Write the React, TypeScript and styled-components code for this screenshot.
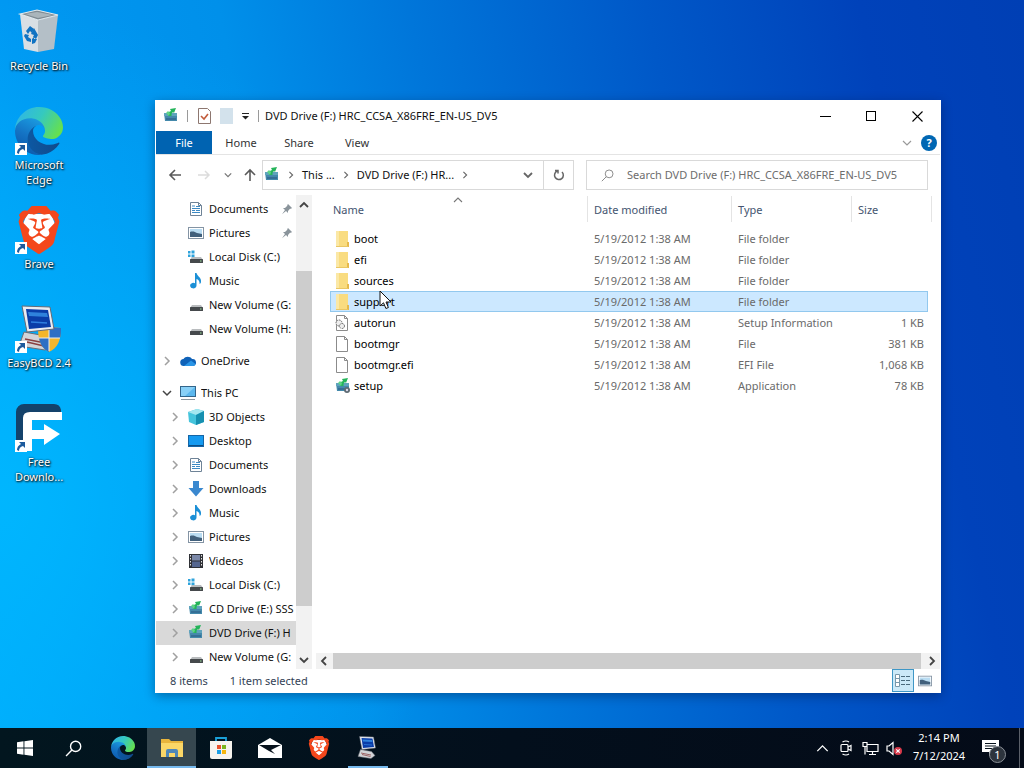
import React from 'react';
import styled, { createGlobalStyle, css } from 'styled-components';
import { SiBrave } from 'react-icons/si';

const GlobalStyle = createGlobalStyle`
  *, *::before, *::after { box-sizing: border-box; }
  html, body, #root { height: 100%; }
  body { margin: 0; overflow: hidden; }
  body, button, input { font-family: "Noto Sans", "Open Sans", sans-serif; font-size: 11px; line-height: 16px; }
  button { border: 0; padding: 0; margin: 0; background: none; color: inherit; }
  svg { display: block; flex: none; }
`;

/* ---------- icons ---------- */

type ChevronDir = 'right' | 'down' | 'up' | 'left';
const chevronPoints: Record<ChevronDir, string> = {
  right: '3,1 7,5 3,9',
  left: '7,1 3,5 7,9',
  down: '1,3 5,7 9,3',
  up: '1,7 5,3 9,7',
};
const Chevron = ({ dir, size = 10, color = '#555', weight = 1.4 }: { dir: ChevronDir; size?: number; color?: string; weight?: number }) => (
  <svg width={size} height={size} viewBox="0 0 10 10" fill="none" stroke={color} strokeWidth={weight}>
    <polyline points={chevronPoints[dir]} />
  </svg>
);

const EdgeIcon = ({ size }: { size: number }) => (
  <svg width={size} height={size} viewBox="0 0 256 256">
    <defs>
      <linearGradient id="edgeLow" x1="0" x2="1"><stop offset="0" stopColor="#0c59a4" /><stop offset="1" stopColor="#114a8b" /></linearGradient>
      <linearGradient id="edgeMid" x1="0.6" y1="0" x2="0.2" y2="1"><stop offset="0" stopColor="#1b9de2" /><stop offset="0.5" stopColor="#1473c4" /><stop offset="1" stopColor="#0b55a8" /></linearGradient>
      <linearGradient id="edgeTop" x1="0" x2="1" y1="0.2" y2="0.6"><stop offset="0" stopColor="#2fb4e8" /><stop offset="0.5" stopColor="#35c9bf" /><stop offset="1" stopColor="#66e04e" /></linearGradient>
    </defs>
    <path fill="url(#edgeLow)" d="M231 190.5c-3.4 1.8-6.9 3.4-10.5 4.7a101.9 101.9 0 0 1-35.9 6.5c-47.3 0-88.5-32.5-88.5-74.3.1-11.4 6.4-21.9 16.4-27.3-42.8 1.8-53.8 46.4-53.8 72.5 0 73.9 68.1 81.4 82.8 81.4 7.9 0 19.8-2.3 27-4.6l1.3-.4c27.6-9.5 51-28.1 66.6-52.8a4 4 0 0 0-5.4-5.7z" />
    <path fill="url(#edgeMid)" d="M105.7 241.4c-8.9-5.5-16.6-12.8-22.7-21.3-26.3-36-18.4-86.5 17.6-112.8 3.8-2.7 7.7-5.2 11.9-7.2 3.1-1.5 8.4-4.1 15.5-4 10.1.1 19.6 4.9 25.7 13 4 5.4 6.3 11.9 6.4 18.7 0-.2 24.5-79.6-80-79.6-43.9 0-80 41.7-80 78.2-.2 19.3 4 38.5 12.1 56 27.6 58.8 94.8 87.6 156.4 67.1-21.1 6.6-44.1 3.7-62.9-8.1z" />
    <path fill="url(#edgeTop)" d="M152.3 148.9c-.9 1-3.4 2.5-3.4 5.6 0 2.6 1.7 5.2 4.8 7.3 14.3 10 41.4 8.6 41.5 8.6 10.7 0 21.1-2.9 30.3-8.3 18.8-11 30.4-31.1 30.4-52.9.3-22.4-8-37.3-11.3-43.9C223.3 23.9 177.7 0 128.1 0 58.1 0 1 56.2.1 126.2c.5-36.5 36.8-66 80-66 3.5 0 23.5.3 42 10.1 16.3 8.6 24.9 18.9 30.8 29.2 6.2 10.7 7.3 24.1 7.3 29.5 0 5.3-2.7 13.3-7.9 19.9z" />
  </svg>
);

const BraveIcon = ({ size }: { size: number }) => (
  <svg width={size} height={size} viewBox="0 0 24 24">
    <path fill="#fff" d="M6 4h12l2 5-3 9-5 4-5-4-3-9z" />
    <SiBrave size={24} color="#f4471c" />
  </svg>
);

const RecycleBinIcon = () => (
  <svg width="48" height="48" viewBox="0 0 48 48">
    <path d="M5 6 23 12 23 44 9 41z" fill="#d9dfe4" />
    <path d="M23 12 43 7 39 41 23 44z" fill="#b4bfc7" />
    <path d="M5 6 22 2 43 7 23 12z" fill="#7f8b93" />
    <path d="M10 6 22 4 38 7 23 10z" fill="#aab5bb" />
    <path d="M5 6 22 2 43 7 23 12z" fill="none" stroke="#e4eaed" strokeWidth="1.2" />
    <g fill="#1173c2">
      <path d="m11 23 4-5 4 3-2 4-2-2-2 3z" />
      <path d="m19 20 4 7-2 4-3-2 1-2-3-1z" />
      <path d="m10 26 4 1-1 2 3 2v3l-4-1-3-5z" />
      <path d="m17 31 2-2v2l3 0-2 4-3 1z" />
    </g>
  </svg>
);

const MonitorIcon = ({ size, shield = false }: { size: number; shield?: boolean }) => (
  <svg width={size} height={size} viewBox="0 0 48 48">
    <path d="M9 27 31 31 38 39 30 45 4 41z" fill="#d2d4d8" stroke="#6b6e76" />
    <path d="m10 34 20 4m-18-1 17 4" stroke="#8a3f3f" strokeWidth="1.5" />
    {shield && (
      <g>
        <path d="M23 23c5 0 9-1 11-3 3 2 7 3 12 3 0 12-3 20-12 24-8-4-11-12-11-24z" fill="#f3b62b" />
        <path d="M34 20c3 2 7 3 12 3 0 4 0 7-1 10H34zM34 33v14c-6-3-9-8-10-14z" fill="#2d6fc4" />
        <path d="M34 21v25M24 33h21" stroke="#e8eef4" />
      </g>
    )}
    <path d="M7 1 35 2 39 24 12 27z" fill="#e9ecf1" stroke="#646a76" />
    <path d="M11 4 33 5 36 22 14 24z" fill="#0a3da8" />
    <path d="M13 7 32 8 33 12 14 11z" fill="#3ea0f2" opacity=".7" />
    <path d="m16 17 16 1" stroke="#2f7fe0" strokeWidth="1.5" />
  </svg>
);

const FdmIcon = () => (
  <svg width="48" height="48" viewBox="0 0 48 48">
    <path d="M1 47V8a8 8 0 0 1 8-8h30q6 0 7 6v4H14v37z" fill="#14426b" />
    <path d="M8 47V14q0-6 7-6h32v8H17v10h12v-6l16 10-16 11v-6H17v12z" fill="#fff" />
  </svg>
);

const DriveIcon = ({ windows = false }: { windows?: boolean }) => (
  <svg width="16" height="16" viewBox="0 0 16 16">
    {windows && <path d="M0 2h2.5v2.5H0zM3.5 1.5h3v3h-3zM0 5.5h2.5V8H0zM3.5 5.5h3v3h-3z" fill="#2ea3dc" />}
    <path d="M4 8h9l2 3H2z" fill="#b9bcbe" />
    <rect x="2" y="10" width="13" height="4" rx=".6" fill="#45494c" />
    <rect x="12" y="11.5" width="1.5" height="1" fill="#9be29b" />
  </svg>
);

const DiscIcon = ({ gear = false }: { gear?: boolean }) => (
  <svg width="16" height="16" viewBox="0 0 16 16">
    <path d="M1 5h13v8H2z" fill="#4489ab" />
    <path d="M1 5h13v3H1z" fill="#5fa3bd" />
    <path d="M3 10h10v2H3z" fill="#356f96" />
    <path d="M5 8Q4 4 8 3L7 1 13 0 11 5 10 4Q8 5 8.5 8z" fill="#25b45a" />
    <path d="M3 5 5 3 7 5 6 8z" fill="#5fd486" />
    {gear && <g><circle cx="12" cy="12" r="3" fill="#5d6a73" /><circle cx="12" cy="12" r="1.2" fill="#dde" /></g>}
  </svg>
);

const DocumentIcon = () => (
  <svg width="16" height="16" viewBox="0 0 16 16">
    <path d="M2.5 1.5h8l3 3v10h-11z" fill="#fff" stroke="#6e8397" />
    <path d="M10.5 1.5v3h3" fill="none" stroke="#6e8397" />
    <path d="M4 5h3M4 7.5h8M4 9.5h3M8 9.5h4M4 11.5h8" stroke="#3c8ac4" />
    <rect x="8" y="5" width="4" height="1" fill="#3c8ac4" />
  </svg>
);

const PicturesIcon = ({ size = 16 }: { size?: number }) => (
  <svg width={size} height={size} viewBox="0 0 16 16">
    <rect x=".5" y="2.5" width="15" height="11" fill="#fff" stroke="#8494a4" />
    <rect x="2" y="4" width="12" height="8" fill="#b9dcf2" />
    <path d="M2 7c3-1 5 0 7 1l5 1v3H2z" fill="#41607c" />
  </svg>
);

const MusicIcon = () => (
  <svg width="16" height="16" viewBox="0 0 16 16">
    <path d="M7 0h1.5c.5 3 5 4.5 4.5 8.5 0 1.5-.5 2-1.5 2.5.5-3-1.5-4.500-3-5V12.5A3.2 2.8 0 1 1 7 10.2z" fill="#1b8fd6" />
  </svg>
);

const CloudIcon = () => (
  <svg width="16" height="16" viewBox="0 0 16 16">
    <path d="M4 13a3.5 3.5 0 0 1-.5-7A5 5 0 0 1 12 6a3.5 3.5 0 0 1 1 7z" fill="#0f62b8" />
    <path d="M4 13 11 7.5 15.5 11Q15 13 13 13z" fill="#2a95e6" />
  </svg>
);

const PcIcon = () => (
  <svg width="16" height="16" viewBox="0 0 16 16">
    <rect x=".5" y="1.5" width="15" height="10" fill="#5cb8ee" stroke="#33658a" />
    <path d="M1 2h14L5 11H1z" fill="#88d0f7" />
    <path d="M1 14.5h14" stroke="#8b969e" />
  </svg>
);

const CubeIcon = () => (
  <svg width="16" height="16" viewBox="0 0 16 16">
    <path d="M0 3 9 0l7 2v11l-8 3-7-3z" fill="#45c4dc" />
    <path d="M0 3l8 3 8-4-7-2z" fill="#a5e7f0" />
    <path d="M8 6l8-4v11l-8 3z" fill="#1690b0" />
  </svg>
);

const DesktopIcon = () => (
  <svg width="16" height="16" viewBox="0 0 16 16">
    <rect x=".5" y="2.5" width="15" height="11" fill="#159af0" stroke="#1565a5" />
    <path d="M1 12.5h14" stroke="#0b4d85" />
  </svg>
);

const DownloadIcon = () => (
  <svg width="16" height="16" viewBox="0 0 16 16">
    <path d="M5 0h6v7h4.5L8 15.5 .5 7H5z" fill="#3a88cf" />
  </svg>
);

const VideoIcon = () => (
  <svg width="16" height="16" viewBox="0 0 16 16">
    <rect x="1" y="1" width="14" height="14" fill="#2f3136" />
    <rect x="4" y="2" width="8" height="5.5" fill="#7b88a8" />
    <rect x="4" y="8.5" width="8" height="5.5" fill="#566790" />
    <path d="M2.5 2v12M13.5 2v12" stroke="#e5e5e5" strokeDasharray="1.5 1.5" />
  </svg>
);

const PinIcon = () => (
  <svg width="12" height="12" viewBox="0 0 12 12">
    <path d="M7 1l4 4-1 .8-1 0L7 8v2L5 8 1 11.3 4 7 2 5h2l2.3-2.2V2z" fill="#8a949b" />
  </svg>
);

const FolderIcon = () => (
  <svg width="16" height="16" viewBox="0 0 16 16">
    <path d="M1 0h12v11l1 .5V16H1z" fill="#f9dc80" />
    <path d="M1 0h3v16H1z" fill="#fbe8a6" />
    <path d="M12 11h2v5h-2z" fill="#e6b94a" />
    <path d="M1 15.5h12" stroke="#eac764" />
  </svg>
);

const FileIcon = ({ gear = false }: { gear?: boolean }) => (
  <svg width="16" height="16" viewBox="0 0 16 16">
    <path d="M1.5.5h8l3 3v12h-11z" fill="#fff" stroke="#8b8b8b" />
    <path d="M9.5.5v3h3" fill="none" stroke="#8b8b8b" />
    {gear && (
      <g fill="#eee" stroke="#666">
        <circle cx="4" cy="8" r="3" strokeDasharray="1.5 .8" />
        <circle cx="7" cy="11" r="2.5" strokeDasharray="1.5 .8" />
      </g>
    )}
  </svg>
);

const SearchIcon = ({ size, color, weight }: { size: number; color: string; weight: number }) => (
  <svg width={size} height={size} viewBox="0 0 16 16" fill="none" stroke={color} strokeWidth={weight}>
    <circle cx="10" cy="6" r="4.8" />
    <path d="M6.5 9.5 1 15" />
  </svg>
);

const ShortcutArrow = styled.span`
  position: absolute;
  left: 0;
  bottom: 0;
  width: 12px;
  height: 12px;
  background: #fff;
`;
const Shortcut = () => (
  <ShortcutArrow>
    <svg width="12" height="12" viewBox="0 0 12 12">
      <path d="M4 2h6v6L8 6Q4 7 4 11L2 10Q2 6 6 4z" fill="#1d5a9c" />
    </svg>
  </ShortcutArrow>
);

/* ---------- desktop ---------- */

const Screen = styled.div`
  display: flex;
  flex-direction: column;
  height: 100%;
  min-height: 600px;
  background:
    radial-gradient(ellipse 45% 65% at 0% 65%, rgba(0, 184, 255, 0.9), rgba(0, 170, 255, 0) 100%),
    linear-gradient(78deg, #00a8fa 0%, #0098f2 14%, #0090ea 32%, #0076da 48%, #0058c8 68%, #0042ba 86%, #003fb4 100%);
`;

const Desktop = styled.main`
  position: relative;
  flex: 1;
  min-height: 0;
`;

const DesktopIcons = styled.div`
  display: flex;
  flex-direction: column;
  width: 78px;
  padding-top: 8px;
`;

const DesktopShortcut = styled.button`
  display: flex;
  flex-direction: column;
  align-items: center;
  height: 99px;
  gap: 2px;
  color: #fff;
  line-height: 15px;
  text-shadow: 1px 1px 2px #000, 0 0 2px rgba(0, 0, 0, 0.8);
`;

const ShortcutPicture = styled.span`
  position: relative;
  display: grid;
  place-items: center;
  width: 48px;
  height: 48px;
`;

/* ---------- window ---------- */

const Window = styled.section`
  position: absolute;
  inset: 100px 83px 35px 155px;
  display: flex;
  flex-direction: column;
  padding: 1px;
  background: #fff;
  color: #111;
  box-shadow: 0 3px 10px rgba(0, 20, 60, 0.4);
`;

const TitleBar = styled.header`
  display: flex;
  align-items: center;
  height: 30px;
  padding-left: 7px;
`;

const QuickAccess = styled.div`
  display: flex;
  align-items: center;
  gap: 8px;
  margin-right: 6px;
`;

const Separator = styled.span`
  width: 1px;
  height: 12px;
  background: #9a9a9a;
`;

const WindowTitle = styled.h1`
  flex: 1;
  margin: 0;
  font-size: 11px;
  font-weight: 400;
  white-space: nowrap;
`;

const CaptionButton = styled.button`
  display: grid;
  place-items: center;
  width: 46px;
  height: 30px;
`;

const Ribbon = styled.nav`
  display: flex;
  align-items: stretch;
  height: 24px;
  border-bottom: 1px solid #e4e4e4;
`;

const RibbonTab = styled.button<{ $file?: boolean }>`
  width: ${(p) => (p.$file ? '56px' : '58px')};
  color: #333;
  ${(p) => p.$file && css`
    background: #0063b1;
    color: #fff;
  `}
`;

const RibbonTools = styled.div`
  display: flex;
  align-items: center;
  gap: 9px;
  margin-left: auto;
  padding-right: 3px;
`;

const HelpButton = styled.button`
  width: 16px;
  height: 16px;
  border-radius: 50%;
  background: #0067b3;
  color: #fff;
  font-weight: 700;
`;

const AddressRow = styled.div`
  display: flex;
  align-items: center;
  height: 40px;
  padding: 0 12px 0 10px;
`;

const NavButtons = styled.div`
  display: flex;
  align-items: center;
  gap: 12px;
  width: 96px;
`;

const AddressBox = styled.div`
  display: flex;
  align-items: center;
  flex: 1 1 312px;
  height: 30px;
  padding-left: 1px;
  border: 1px solid #d9d9d9;
`;

const Crumbs = styled.div`
  display: flex;
  align-items: center;
  flex: 1;
  gap: 7px;
  white-space: nowrap;
`;

const BoxButton = styled.button<{ $divided?: boolean }>`
  display: grid;
  place-items: center;
  width: 30px;
  height: 28px;
  border-left: ${(p) => (p.$divided ? '1px solid #d9d9d9' : '0')};
`;

const SearchBox = styled.label`
  display: flex;
  align-items: center;
  flex: 1 1 342px;
  gap: 13px;
  height: 30px;
  margin-left: 12px;
  padding-left: 14px;
  border: 1px solid #d9d9d9;
`;

const SearchInput = styled.input`
  flex: 1;
  min-width: 0;
  border: 0;
  outline: 0;
  padding: 0;
  background: none;
  &::placeholder { color: #6d6d6d; opacity: 1; }
`;

const Body = styled.div`
  display: flex;
  flex: 1;
  min-height: 0;
`;

const Tree = styled.nav`
  width: 140px;
  padding-top: 2px;
  overflow: hidden;
`;

const TreeGroup = styled.ul`
  margin: 0 0 8px;
  padding: 0;
  list-style: none;
`;

const TreeItem = styled.li<{ $root?: boolean; $selected?: boolean }>`
  display: flex;
  align-items: center;
  gap: 5px;
  height: 24px;
  padding-left: ${(p) => (p.$root ? '6px' : '14px')};
  background: ${(p) => (p.$selected ? '#d9d9d9' : 'transparent')};
`;

const TreeToggle = styled.span`
  display: grid;
  width: 13px;
  flex: none;
`;

const TreeLabel = styled.span`
  flex: 1;
  min-width: 0;
  overflow: hidden;
  white-space: nowrap;
`;

const PinSlot = styled.span`
  padding-right: 3px;
`;

const VScroll = styled.div`
  display: flex;
  flex-direction: column;
  align-items: stretch;
  width: 16px;
  padding-top: 1px;
  background: #f2f2f2;
`;

const HScroll = styled.div`
  display: flex;
  height: 16px;
  margin-left: 4px;
  background: #f2f2f2;
`;

const ScrollButton = styled.button<{ $vertical?: boolean }>`
  display: grid;
  place-items: center;
  width: 16px;
  height: ${(p) => (p.$vertical ? '18px' : '16px')};
`;

const VThumb = styled.div`
  flex: 335;
  background: #cdcdcd;
`;

const Track = styled.div<{ $share: number }>`
  flex: ${(p) => p.$share};
`;

const HThumb = styled.div`
  flex: 1;
  margin: 0 3px 0 1px;
  background: #cdcdcd;
`;

const Content = styled.div`
  display: flex;
  flex-direction: column;
  flex: 1;
  min-width: 0;
`;

const ListArea = styled.div`
  flex: 1;
  padding: 0 12px 0 18px;
`;

const FileTable = styled.table`
  width: 100%;
  table-layout: fixed;
  border-collapse: collapse;
`;

const HeadCell = styled.th<{ $width?: number }>`
  position: relative;
  width: ${(p) => (p.$width ? `${p.$width}px` : 'auto')};
  height: 33px;
  padding: 0 0 4px ${(p) => (p.$width ? '6px' : '3px')};
  text-align: left;
  font-weight: 400;
  color: #44546f;
  &::after {
    content: '';
    position: absolute;
    right: 0;
    top: 1px;
    height: 26px;
    border-right: 1px solid #e4e4e4;
  }
  &:last-child::after { right: -4px; }
`;

const SortMark = styled.span`
  position: absolute;
  top: 0;
  left: 50%;
  margin-left: -6px;
`;

const FileRow = styled.tr<{ $selected?: boolean }>`
  position: relative;
  height: 21px;
  ${(p) => p.$selected && css`
    background: #cce8ff;
    outline: 1px solid #92c8ee;
    outline-offset: -1px;
  `}
`;

const Cell = styled.td<{ $right?: boolean }>`
  padding: ${(p) => (p.$right ? '0 4px 0 0' : '0 0 0 6px')};
  text-align: ${(p) => (p.$right ? 'right' : 'left')};
  color: #6a6a6a;
  white-space: nowrap;
`;

const NameCell = styled(Cell)`
  position: relative;
  padding-left: 5px;
  color: #000;
`;

const FileName = styled.span`
  display: flex;
  align-items: center;
  gap: 3px;
`;

const Pointer = styled.svg`
  position: absolute;
  left: 49px;
  top: -1px;
`;

const StatusBar = styled.footer`
  display: flex;
  align-items: center;
  gap: 22px;
  height: 23px;
  padding: 0 4px 0 14px;
  color: #333f55;
`;

const ViewButtons = styled.div`
  display: flex;
  margin-left: auto;
`;

const ViewButton = styled.button<{ $active?: boolean }>`
  display: grid;
  place-items: center;
  width: 22px;
  height: 23px;
  ${(p) => p.$active && css`
    background: #cbe9f8;
    border: 1px solid #3f97c6;
  `}
`;

/* ---------- taskbar ---------- */

const Taskbar = styled.footer`
  display: flex;
  justify-content: space-between;
  height: 40px;
  background: linear-gradient(90deg, #02161f, #030f1c 50%, #040b18);
  color: #fff;
`;

const TaskGroup = styled.div`
  display: flex;
`;

const TaskButton = styled.button<{ $active?: boolean; $running?: boolean }>`
  position: relative;
  display: grid;
  place-items: center;
  width: 49px;
  height: 40px;
  background: ${(p) => (p.$active ? '#36474f' : 'transparent')};
  &::after {
    content: '';
    position: absolute;
    bottom: 0;
    left: ${(p) => (p.$active ? '0' : '5px')};
    right: ${(p) => (p.$active ? '0' : '4px')};
    height: ${(p) => (p.$active || p.$running ? '2px' : '0')};
    background: #76b9ed;
  }
`;

const Tray = styled.div`
  display: flex;
  align-items: center;
  gap: 8px;
`;

const TrayButton = styled.button`
  display: grid;
  place-items: center;
  width: 16px;
  height: 40px;
`;

const Clock = styled.button`
  width: 58px;
  padding-bottom: 2px;
  text-align: center;
  line-height: 18px;
`;

const NoticeButton = styled.button`
  position: relative;
  display: grid;
  place-items: start;
  width: 20px;
  height: 40px;
  padding-top: 12px;
  margin: 0 9px 0 6px;
`;

const NoticeCount = styled.span`
  position: absolute;
  left: 7px;
  top: 18px;
  width: 17px;
  height: 17px;
  border: 1px solid #8a8f96;
  border-radius: 50%;
  background: #2d343d;
  text-align: center;
  line-height: 15px;
`;

const ShowDesktop = styled.button`
  width: 5px;
  height: 40px;
  border-left: 1px solid #5b6069;
`;

/* ---------- data ---------- */

const shortcuts = [
  { lines: ['Recycle Bin'], icon: <RecycleBinIcon />, link: false },
  { lines: ['Microsoft', 'Edge'], icon: <EdgeIcon size={48} />, link: true },
  { lines: ['Brave'], icon: <BraveIcon size={48} />, link: true },
  { lines: ['EasyBCD 2.4'], icon: <MonitorIcon size={48} shield />, link: true },
  { lines: ['Free', 'Downlo...'], icon: <FdmIcon />, link: true },
];

type Node = { label: string; icon: React.ReactNode; toggle?: 'right' | 'down'; root?: boolean; pinned?: boolean; selected?: boolean };

const treeGroups: Node[][] = [
  [
    { label: 'Documents', icon: <DocumentIcon />, pinned: true },
    { label: 'Pictures', icon: <PicturesIcon />, pinned: true },
    { label: 'Local Disk (C:)', icon: <DriveIcon windows /> },
    { label: 'Music', icon: <MusicIcon /> },
    { label: 'New Volume (G:', icon: <DriveIcon /> },
    { label: 'New Volume (H:', icon: <DriveIcon /> },
  ],
  [{ label: 'OneDrive', icon: <CloudIcon />, toggle: 'right', root: true }],
  [
    { label: 'This PC', icon: <PcIcon />, toggle: 'down', root: true },
    { label: '3D Objects', icon: <CubeIcon />, toggle: 'right' },
    { label: 'Desktop', icon: <DesktopIcon />, toggle: 'right' },
    { label: 'Documents', icon: <DocumentIcon />, toggle: 'right' },
    { label: 'Downloads', icon: <DownloadIcon />, toggle: 'right' },
    { label: 'Music', icon: <MusicIcon />, toggle: 'right' },
    { label: 'Pictures', icon: <PicturesIcon />, toggle: 'right' },
    { label: 'Videos', icon: <VideoIcon />, toggle: 'right' },
    { label: 'Local Disk (C:)', icon: <DriveIcon windows />, toggle: 'right' },
    { label: 'CD Drive (E:) SSS', icon: <DiscIcon />, toggle: 'right' },
    { label: 'DVD Drive (F:) H', icon: <DiscIcon />, toggle: 'right', selected: true },
    { label: 'New Volume (G:', icon: <DriveIcon />, toggle: 'right' },
  ],
];

const modified = '5/19/2012 1:38 AM';
const files = [
  { name: 'boot', type: 'File folder', size: '', icon: <FolderIcon /> },
  { name: 'efi', type: 'File folder', size: '', icon: <FolderIcon /> },
  { name: 'sources', type: 'File folder', size: '', icon: <FolderIcon /> },
  { name: 'support', type: 'File folder', size: '', icon: <FolderIcon />, selected: true },
  { name: 'autorun', type: 'Setup Information', size: '1 KB', icon: <FileIcon gear /> },
  { name: 'bootmgr', type: 'File', size: '381 KB', icon: <FileIcon /> },
  { name: 'bootmgr.efi', type: 'EFI File', size: '1,068 KB', icon: <FileIcon /> },
  { name: 'setup', type: 'Application', size: '78 KB', icon: <DiscIcon gear /> },
];

const line = { fill: 'none', stroke: '#fff', strokeWidth: 1.2 };

/* ---------- app ---------- */

export default function App() {
  return (
    <Screen>
      <GlobalStyle />
      <Desktop>
        <DesktopIcons>
          {shortcuts.map((s) => (
            <DesktopShortcut key={s.lines[0]}>
              <ShortcutPicture>
                {s.icon}
                {s.link && <Shortcut />}
              </ShortcutPicture>
              <span>
                {s.lines.map((l) => (
                  <div key={l}>{l}</div>
                ))}
              </span>
            </DesktopShortcut>
          ))}
        </DesktopIcons>

        <Window aria-label="File Explorer">
          <TitleBar>
            <QuickAccess>
              <DiscIcon />
              <Separator />
              <svg width="16" height="16" viewBox="0 0 16 16">
                <path d="M2.5.5h9l3 3v12h-12z" fill="#fff" stroke="#8d7770" />
                <path d="m5 8 3 3 4-5" fill="none" stroke="#c25c3b" strokeWidth="1.6" />
              </svg>
              <svg width="13" height="16" viewBox="0 0 13 16">
                <path d="M0 0h13v16H0z" fill="#d3e2ec" />
              </svg>
              <svg width="9" height="9" viewBox="0 0 9 9">
                <path d="M1 1.5h7" stroke="#222" />
                <path d="M1 4h7L4.5 7.5z" fill="#222" />
              </svg>
              <Separator />
            </QuickAccess>
            <WindowTitle>DVD Drive (F:) HRC_CCSA_X86FRE_EN-US_DV5</WindowTitle>
            <CaptionButton aria-label="Minimize">
              <svg width="11" height="11" viewBox="0 0 11 11"><path d="M0 5.5h11" stroke="#000" /></svg>
            </CaptionButton>
            <CaptionButton aria-label="Maximize">
              <svg width="10" height="10" viewBox="0 0 10 10"><rect x=".5" y=".5" width="9" height="9" fill="none" stroke="#000" /></svg>
            </CaptionButton>
            <CaptionButton aria-label="Close">
              <svg width="11" height="11" viewBox="0 0 11 11"><path d="m.5.5 10 10m0-10-10 10" stroke="#000" strokeWidth="1.1" /></svg>
            </CaptionButton>
          </TitleBar>

          <Ribbon>
            <RibbonTab $file>File</RibbonTab>
            <RibbonTab>Home</RibbonTab>
            <RibbonTab>Share</RibbonTab>
            <RibbonTab>View</RibbonTab>
            <RibbonTools>
              <Chevron dir="down" color="#999" weight={1.2} />
              <HelpButton>?</HelpButton>
            </RibbonTools>
          </Ribbon>

          <AddressRow>
            <NavButtons>
              <svg width="18" height="12" viewBox="0 0 18 12" fill="none" stroke="#5a5a5a" strokeWidth="1.6"><path d="M15 6H4M9 1 4 6l5 5" /></svg>
              <svg width="16" height="12" viewBox="0 0 16 12" fill="none" stroke="#dcdcdc" strokeWidth="1.5"><path d="M2 6h11M9 2l4 4-4 4" /></svg>
              <Chevron dir="down" size={8} color="#777" weight={1.6} />
              <svg width="12" height="14" viewBox="0 0 12 14" fill="none" stroke="#5a5a5a" strokeWidth="1.6"><path d="M6 13V2M1 7l5-5 5 5" /></svg>
            </NavButtons>
            <AddressBox>
              <Crumbs>
                <DiscIcon />
                <Chevron dir="right" size={8} color="#666" />
                <span>This ...</span>
                <Chevron dir="right" size={8} color="#666" />
                <span>DVD Drive (F:) HR...</span>
                <Chevron dir="right" size={8} color="#666" />
              </Crumbs>
              <BoxButton aria-label="Previous locations"><Chevron dir="down" color="#666" weight={1.8} /></BoxButton>
              <BoxButton $divided aria-label="Refresh">
                <svg width="12" height="12" viewBox="0 0 12 12" fill="none" stroke="#666" strokeWidth="1.5"><path d="M4 2.200A4.4 4.4 0 1 0 9 3M2 1.5h3v3" /></svg>
              </BoxButton>
            </AddressBox>
            <SearchBox>
              <SearchIcon size={13} color="#8a8a8a" weight={1.2} />
              <SearchInput aria-label="Search" placeholder="Search DVD Drive (F:) HRC_CCSA_X86FRE_EN-US_DV5" />
            </SearchBox>
          </AddressRow>

          <Body>
            <Tree>
              {treeGroups.map((group, g) => (
                <TreeGroup key={g}>
                  {group.map((n) => (
                    <TreeItem key={n.label} $root={n.root} $selected={n.selected}>
                      <TreeToggle>
                        {n.toggle && <Chevron dir={n.toggle} color={n.toggle === 'down' ? '#444' : '#a0a0a0'} weight={1.5} />}
                      </TreeToggle>
                      {n.icon}
                      <TreeLabel>{n.label}</TreeLabel>
                      {n.pinned && <PinSlot><PinIcon /></PinSlot>}
                    </TreeItem>
                  ))}
                </TreeGroup>
              ))}
            </Tree>
            <VScroll>
              <ScrollButton $vertical aria-label="Scroll up"><Chevron dir="up" color="#444" weight={1.8} /></ScrollButton>
              <Track $share={57} />
              <VThumb />
              <Track $share={45} />
              <ScrollButton $vertical aria-label="Scroll down"><Chevron dir="down" color="#444" weight={1.8} /></ScrollButton>
            </VScroll>
            <Content>
              <ListArea>
                <FileTable>
                  <thead>
                    <tr>
                      <HeadCell>Name<SortMark><Chevron dir="up" color="#777" weight={1.1} /></SortMark></HeadCell>
                      <HeadCell $width={144}>Date modified</HeadCell>
                      <HeadCell $width={120}>Type</HeadCell>
                      <HeadCell $width={76}>Size</HeadCell>
                    </tr>
                  </thead>
                  <tbody>
                    {files.map((f) => (
                      <FileRow key={f.name} $selected={f.selected}>
                        <NameCell>
                          <FileName>{f.icon}{f.name}</FileName>
                          {f.selected && (
                            <Pointer width="14" height="20" viewBox="0 0 14 20">
                              <path d="M1 1v15l3.5-3.2 2.4 5.7 2.5-1-2.4-5.5H12z" fill="#fff" stroke="#111" />
                            </Pointer>
                          )}
                        </NameCell>
                        <Cell>{modified}</Cell>
                        <Cell>{f.type}</Cell>
                        <Cell $right>{f.size}</Cell>
                      </FileRow>
                    ))}
                  </tbody>
                </FileTable>
              </ListArea>
              <HScroll>
                <ScrollButton aria-label="Scroll left"><Chevron dir="left" color="#444" weight={1.8} /></ScrollButton>
                <HThumb />
                <ScrollButton aria-label="Scroll right"><Chevron dir="right" color="#444" weight={1.8} /></ScrollButton>
              </HScroll>
            </Content>
          </Body>

          <StatusBar>
            <span>8 items</span>
            <span>1 item selected</span>
            <ViewButtons>
              <ViewButton $active aria-label="Details view">
                <svg width="16" height="14" viewBox="0 0 16 14">
                  <path d="M.5.5h4v12h-4zM.5 4.5h4M.5 8.5h4" fill="#fff" stroke="#7798ab" />
                  <path d="M6 2.5h4M11 2.5h4M6 6.5h4M11 6.5h4M6 10.5h4M11 10.5h4" stroke="#4a6a7c" />
                </svg>
              </ViewButton>
              <ViewButton aria-label="Large icons view"><PicturesIcon size={14} /></ViewButton>
            </ViewButtons>
          </StatusBar>
        </Window>
      </Desktop>

      <Taskbar>
        <TaskGroup>
          <TaskButton aria-label="Start">
            <svg width="16" height="16" viewBox="0 0 16 16"><path d="M0 2.2 6.5 1.3V7.6H0zM7.4 1.2 16 0v7.6H7.4zM0 8.4h6.5v6.3L0 13.8zM7.4 8.4H16V16l-8.6-1.2z" fill="#fff" /></svg>
          </TaskButton>
          <TaskButton aria-label="Search"><SearchIcon size={17} color="#fff" weight={1.3} /></TaskButton>
          <TaskButton aria-label="Microsoft Edge"><EdgeIcon size={24} /></TaskButton>
          <TaskButton $active aria-label="File Explorer">
            <svg width="24" height="20" viewBox="0 0 24 20">
              <path d="M1 1h8l2 2h12v15H1z" fill="#e9b53c" />
              <path d="M1 5h22v14H1z" fill="#fbd767" />
              <path d="M6 19v-6q0-2 2-2h8q2 0 2 2v6h-3v-4H9v4z" fill="#4f87b8" />
            </svg>
          </TaskButton>
          <TaskButton aria-label="Microsoft Store">
            <svg width="24" height="24" viewBox="0 0 24 24">
              <path d="M7 6V2h10v4" fill="none" stroke="#1aa0d8" strokeWidth="1.8" />
              <path d="M1 5h22v16q0 2-2 2H3q-2 0-2-2z" fill="#f6f3ee" />
              <path d="M8 9h4v4H8z" fill="#e8512c" /><path d="M13 9h4v4h-4z" fill="#7ab51d" />
              <path d="M8 14h4v4H8z" fill="#1c9ee4" /><path d="M13 14h4v4h-4z" fill="#f5b50c" />
            </svg>
          </TaskButton>
          <TaskButton aria-label="Mail">
            <svg width="24" height="20" viewBox="0 0 24 20">
              <path d="M0 7 12 0l12 7v13H0z" fill="#fff" />
              <path d="M1 7h22l-10 5 4 4-6-3z" fill="#07121c" />
            </svg>
          </TaskButton>
          <TaskButton aria-label="Brave"><BraveIcon size={24} /></TaskButton>
          <TaskButton $running aria-label="EasyBCD"><MonitorIcon size={24} /></TaskButton>
        </TaskGroup>
        <Tray>
          <TrayButton aria-label="Show hidden icons"><Chevron dir="up" size={13} color="#fff" weight={1} /></TrayButton>
          <TrayButton aria-label="Meet Now">
            <svg width="14" height="16" viewBox="0 0 14 16" {...line}><rect x="2" y="4.5" width="7" height="7" rx="1" /><path d="m9 7 3-1.5v5L9 9M3.5 2Q7 0 10 2M3.5 14Q7 16 10 14" /></svg>
          </TrayButton>
          <TrayButton aria-label="Network">
            <svg width="17" height="15" viewBox="0 0 17 15" {...line}><path d="M5 3.5h11v7H5zM10.5 10.5v3M7 13.5h7M1 1.5h4v4H1zM3 5.5v8" /></svg>
          </TrayButton>
          <TrayButton aria-label="Volume muted">
            <svg width="17" height="15" viewBox="0 0 17 15" {...line}>
              <path d="M1 5h2l4-3.5v12L3 10H1z" />
              <circle cx="12" cy="10" r="4" fill="#d8394a" stroke="none" />
              <path d="m10.3 8.3 3.4 3.4m0-3.4-3.4 3.4" />
            </svg>
          </TrayButton>
          <Clock>
            <div>2:14 PM</div>
            <div>7/12/2024</div>
          </Clock>
          <NoticeButton aria-label="Notifications">
            <svg width="17" height="16" viewBox="0 0 17 16"><path d="M0 0h17v12h-6l-4 4v-4H0z" fill="#fff" /><path d="M3 3.5h11M3 6h11M3 8.5h11" stroke="#07121c" /></svg>
            <NoticeCount>1</NoticeCount>
          </NoticeButton>
          <ShowDesktop aria-label="Show desktop" />
        </Tray>
      </Taskbar>
    </Screen>
  );
}
